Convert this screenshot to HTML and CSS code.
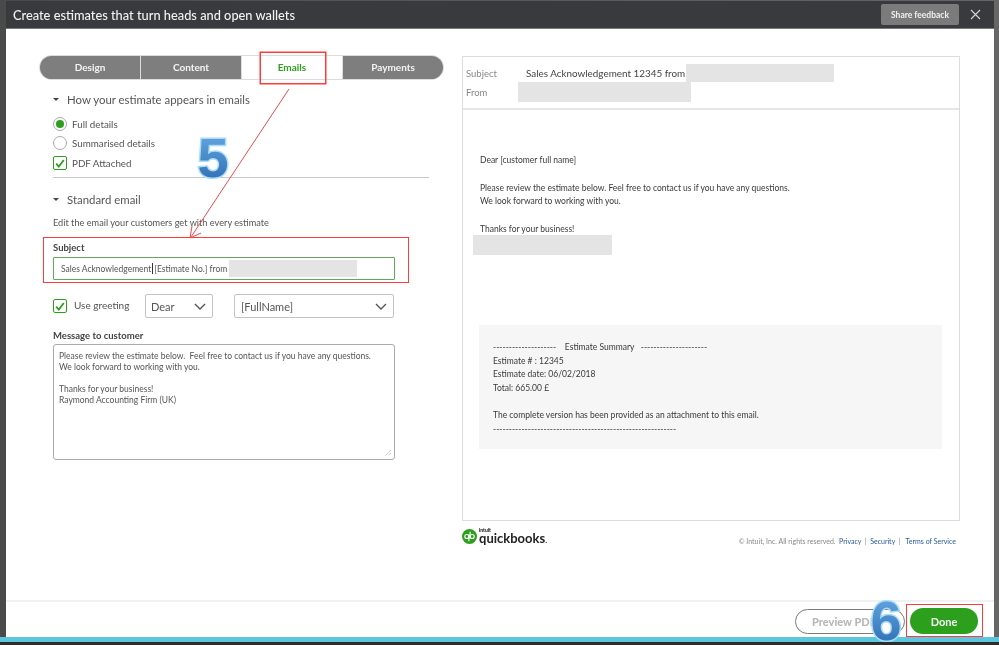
FILE: index.html
```html
<!DOCTYPE html>
<html lang="en">
<head>
<meta charset="utf-8">
<title>Create estimates</title>
<link rel="stylesheet" href="styles.css">
</head>
<body>
<div class="frame">
  <div class="dialog">
    <header class="topbar">
      <h1 class="title">Create estimates that turn heads and open wallets</h1>
      <div class="top-actions">
        <span class="share">Share feedback</span>
        <svg class="close" width="11" height="11" viewBox="0 0 11 11"><path d="M1 1l9 9M10 1l-9 9" stroke="#d5d5d5" stroke-width="1.1" fill="none"/></svg>
      </div>
    </header>
    <main class="body">
      <section class="left">
        <nav class="tabs">
          <span class="tab">Design</span>
          <span class="tab">Content</span>
          <span class="tab active">Emails</span>
          <span class="tab">Payments</span>
        </nav>
        <div class="section-head first"><i class="caret"></i>How your estimate appears in emails</div>
        <div class="opt opt-a"><i class="radio on"></i>Full details</div>
        <div class="opt opt-b"><i class="radio"></i>Summarised details</div>
        <div class="opt opt-c"><i class="check"><svg width="10" height="9" viewBox="0 0 10 9"><path d="M1.2 4.6l2.6 3L8.8 1" stroke="#2ca01c" stroke-width="1.8" fill="none"/></svg></i>PDF Attached</div>
        <div class="rule"></div>
        <div class="section-head second"><i class="caret"></i>Standard email</div>
        <p class="hint">Edit the email your customers get with every estimate</p>
        <label class="field-label subject-label">Subject</label>
        <div class="subject-input">
          <span>Sales Acknowledgement</span><i class="cursor"></i><span>[Estimate No.] from</span><i class="blank blank-subject"></i>
        </div>
        <div class="greeting">
          <i class="check"><svg width="10" height="9" viewBox="0 0 10 9"><path d="M1.2 4.6l2.6 3L8.8 1" stroke="#2ca01c" stroke-width="1.8" fill="none"/></svg></i>
          <span class="greet-label">Use greeting</span>
          <div class="select select-dear">Dear<svg width="12" height="7" viewBox="0 0 12 7"><path d="M1 1l5 5 5-5" stroke="#555" stroke-width="1.4" fill="none"/></svg></div>
          <div class="select select-name">[FullName]<svg width="12" height="7" viewBox="0 0 12 7"><path d="M1 1l5 5 5-5" stroke="#555" stroke-width="1.4" fill="none"/></svg></div>
        </div>
        <label class="field-label message-label">Message to customer</label>
        <div class="message">
          <p>Please review the estimate below.&nbsp; Feel free to contact us if you have any questions.</p>
          <p>We look forward to working with you.</p>
          <p>&nbsp;</p>
          <p>Thanks for your business!</p>
          <p>Raymond Accounting Firm (UK)</p>
          <svg class="grip" width="8" height="8" viewBox="0 0 8 8"><path d="M7 1L1 7M7 4L4 7" stroke="#aaa" stroke-width="1" stroke-dasharray="1 1" fill="none"/></svg>
        </div>
      </section>
      <section class="right">
        <div class="preview">
          <div class="mail-head">
            <div class="mail-row row-subject"><span class="mail-key">Subject</span><span class="mail-subject">Sales Acknowledgement 12345 from</span><i class="blank blank-mail"></i></div>
            <div class="mail-row row-from"><span class="mail-key">From</span><i class="blank blank-from"></i></div>
          </div>
          <div class="mail-body">
            <p class="line salute">Dear [customer full name]</p>
            <p class="line">Please review the estimate below. Feel free to contact us if you have any questions.</p>
            <p class="line">We look forward to working with you.</p>
            <p class="line thanks">Thanks for your business!</p>
            <i class="blank blank-sign"></i>
            <div class="summary">
              <p class="line">--------------------&nbsp;&nbsp;&nbsp; Estimate Summary&nbsp;&nbsp; ---------------------</p>
              <p class="line">Estimate # : 12345</p>
              <p class="line">Estimate date: 06/02/2018</p>
              <p class="line">Total: 665.00 £</p>
              <p class="line gap">The complete version has been provided as an attachment to this email.</p>
              <p class="line">----------------------------------------------------------</p>
            </div>
          </div>
        </div>
        <div class="legal">
          <div class="logo">
            <svg width="15" height="15" viewBox="0 0 15 15"><circle cx="7.5" cy="7.5" r="7.5" fill="#2ca01c"/><circle cx="4.8" cy="7.5" r="2" stroke="#fff" stroke-width="1.1" fill="none"/><circle cx="10.2" cy="7.5" r="2" stroke="#fff" stroke-width="1.1" fill="none"/><path d="M6.9 5.5v6.7M8.1 2.8v6.7" stroke="#fff" stroke-width="1.1" fill="none"/></svg>
            <div class="wordmark"><span class="intuit">intuit</span><span class="qb">quickbooks<small>.</small></span></div>
          </div>
          <div class="links">© Intuit, Inc. All rights reserved.&nbsp; <a>Privacy</a> &nbsp;|&nbsp; <a>Security</a> &nbsp;|&nbsp;&nbsp; <a>Terms of Service</a></div>
        </div>
      </section>
    </main>
    <footer class="foot">
      <span class="btn-preview">Preview PDF</span>
      <span class="btn-done">Done</span>
    </footer>
  </div>
  <div class="cyan"></div>
</div>

<div class="redbox redbox-tab"></div>
<div class="redbox redbox-subject"></div>
<div class="redbox redbox-done"></div>
<svg class="arrow" width="120" height="160" viewBox="0 0 120 160"><path d="M100 1L2 149" stroke="#f04a4a" stroke-width="1" fill="none"/><path d="M12 145L1 150l2-12" stroke="#f04a4a" stroke-width="1" fill="none"/></svg>
<svg class="step step-5" width="40" height="80" viewBox="0 0 40 80">
  <defs><linearGradient id="stepfill" x1="0" y1="0" x2="0" y2="1"><stop offset="0" stop-color="#6aaee8"/><stop offset="1" stop-color="#2a68ad"/></linearGradient></defs>
  <text class="step-glyph" x="20" y="57" fill="url(#stepfill)">5</text>
</svg>
<svg class="step step-6" width="40" height="62" viewBox="0 0 40 62">
  <text class="step-glyph" x="20" y="57" fill="url(#stepfill)">6</text>
</svg>
</body>
</html>
```

FILE: styles.css
```css
* { box-sizing: border-box; }
html, body { margin: 0; padding: 0; }
body {
  width: 999px; height: 645px; overflow: hidden; position: relative;
  background: #fff;
  font-family: Lato, "Open Sans", sans-serif;
  color: #555;
}
p { margin: 0; }
i { display: block; font-style: normal; }
.frame {
  height: 645px;
  padding: 1px 5px 0 6px;
  background: linear-gradient(90deg, #4a4a4a, #666 100%);
  display: flex; flex-direction: column;
  filter: blur(.3px);
}
.dialog { flex: 1; background: #fff; display: flex; flex-direction: column; min-height: 0; }
.cyan { height: 8px; flex: none; margin: 0 -5px 0 -6px; background: linear-gradient(#5cc6dc 0 5px, #2b2c30 5px); }
.topbar {
  height: 28px; flex: none;
  background: #393a3e; border-bottom: 1px solid #77797c;
  display: flex; align-items: center; justify-content: space-between;
  padding: 0 13px 0 7px;
}
.title { margin: 0; font-size: 12.8px; font-weight: 500; color: #f2f2f2; }
.top-actions { display: flex; align-items: center; gap: 11px; }
.share {
  width: 78px; height: 21px; background: #7b7b7b; border-radius: 2px;
  color: #f0f0f0; font-size: 8.5px; font-weight: 700;
  display: flex; align-items: center; justify-content: center;
}
.body { flex: 1; display: flex; min-height: 0; }
.left { width: 456px; padding: 27px 0 0 34px; flex: none; }
.tabs {
  width: 403px; height: 23px; display: flex; border-radius: 12px; overflow: hidden;
  background: #7e7e7e; box-shadow: 0 0 0 1px #ddd;
}
.tab {
  flex: 1; display: flex; align-items: center; justify-content: center; padding-bottom: 1px;
  color: #f4f4f4; font-size: 10px; font-weight: 700; border-right: 1px solid #ddd;
}
.tab:last-child { border-right: 0; }
.tab.active { background: #fff; color: #2ca01c; }
.section-head { font-size: 11.4px; display: flex; align-items: center; color: #555; padding-left: 13px; }
.caret { width: 0; height: 0; border: 3px solid transparent; border-top: 3px solid #444; border-bottom: 0; margin-right: 8px; }
.section-head.first { margin-top: 13px; height: 15px; }
.opt { font-size: 9.8px; display: flex; align-items: center; gap: 5px; margin-left: 13px; height: 14px; color: #555; }
.opt-a { margin-top: 10px; }
.opt-b { margin-top: 5px; }
.opt-c { margin-top: 6px; }
.radio { width: 14px; height: 14px; border-radius: 50%; border: 1px solid #aaa; background: #fff; display: flex; align-items: center; justify-content: center; }
.radio.on::after { content: ""; width: 8px; height: 8px; border-radius: 50%; background: #2ca01c; }
.check { width: 14px; height: 14px; border: 1px solid #2ca01c; border-radius: 2px; display: flex; align-items: center; justify-content: center; flex: none; background: #fff; }
.rule { width: 376px; height: 1px; background: #c8c8d0; margin: 7px 0 0 13px; }
.section-head.second { margin-top: 14px; height: 15px; }
.hint { font-size: 9.2px; margin: 10px 0 0 13px; height: 12px; line-height: 12px; color: #555; }
.field-label { display: block; font-size: 9.5px; font-weight: 700; color: #444; margin-left: 13px; }
.subject-label { margin-top: 13px; height: 12px; line-height: 12px; }
.subject-input {
  width: 342px; height: 23px; margin: 3px 0 0 13px;
  border: 1px solid #63a85a; border-radius: 1px;
  display: flex; align-items: center; padding-left: 7px;
  font-size: 8.5px; color: #555;
}
.cursor { width: 1px; height: 11px; background: #333; margin: 0 1px 0 1px; }
.blank { background: #e4e4e4; }
.blank-subject { width: 128px; height: 17px; margin-left: 2px; }
.greeting { display: flex; align-items: center; margin: 14px 0 0 13px; height: 24px; }
.greet-label { font-size: 10px; margin: -3px 0 0 7px; width: 71px; color: #555; }
.select {
  height: 24px; border: 1px solid #c4c4c4; border-radius: 2px; background: #fff;
  display: flex; align-items: center; justify-content: space-between;
  padding: 0 6px 0 5px; font-size: 11px; color: #555;
}
.select-dear { width: 68px; margin-right: 21px; }
.select-name { width: 160px; padding-left: 6px; }
.message-label { margin-top: 11px; height: 13px; line-height: 13px; }
.message {
  width: 342px; height: 116px; margin: 2px 0 0 13px; position: relative;
  border: 1px solid #aaa; border-radius: 3px; padding: 6px 5px;
  font-size: 8.5px; line-height: 11px; color: #555;
}
.grip { position: absolute; right: 2px; bottom: 2px; }
.right { width: 498px; padding-top: 27px; flex: none; }
.preview { width: 498px; height: 465px; border: 1px solid #ddd; display: flex; flex-direction: column; }
.mail-head { height: 53px; border-bottom: 2px solid #e6e6e6; padding: 7px 0 0 3px; flex: none; }
.mail-row { display: flex; align-items: center; font-size: 9.5px; }
.mail-key { width: 60px; color: #888; }
.row-subject { height: 18px; }
.row-from { height: 20px; margin-top: 0; }
.row-from .mail-key { width: 52px; }
.mail-subject { color: #444; font-size: 9.9px; }
.blank-mail { width: 148px; height: 18px; margin-left: 1px; }
.blank-from { width: 173px; height: 20px; }
.mail-body { flex: 1; padding: 44px 17px 0 17px; }
.line { font-size: 8.5px; line-height: 13.5px; color: #3a3a3a; }
.salute { margin-bottom: 14px; }
.thanks { margin-top: 14px; }
.blank-sign { width: 139px; height: 20px; margin: -1px 0 0 -7px; }
.summary { width: 463px; height: 124px; margin: 70px 0 0 -1px; background: #f6f6f6; padding: 16px 0 0 14px; }
.line.gap { margin-top: 14px; }
.legal { display: flex; justify-content: space-between; align-items: flex-start; width: 494px; margin-top: 6px; }
.logo { display: flex; align-items: center; gap: 2px; }
.wordmark { display: flex; flex-direction: column; }
.intuit { font-size: 5px; font-weight: 900; line-height: 6px; color: #222; }
.qb { font-size: 13px; font-weight: 700; line-height: 11px; color: #222; }
.qb small { font-size: 8px; }
.links { font-size: 7px; color: #888; margin-top: 10px; }
.links a { color: #2a5a9a; }
.foot {
  height: 37px; flex: none; margin-top: auto; border-top: 2px solid #f1f1f4;
  display: flex; align-items: center; justify-content: flex-end; padding: 3px 16px 0 0; gap: 5px;
}
.btn-preview {
  width: 110px; height: 25px; border: 1px solid #7a7a7a; border-radius: 13px; white-space: nowrap;
  color: #b8b8b8; font-size: 11px; font-weight: 900; display: flex; align-items: center; padding-left: 16px;
}
.btn-done {
  width: 68px; height: 26px; border-radius: 13px; background: #2ca01c; color: #f4f4f4;
  font-size: 11px; font-weight: 700; display: flex; align-items: center; justify-content: center;
}
.redbox { position: absolute; border: 1px solid #ff3b3b; }
.redbox-tab { left: 260px; top: 52px; width: 66px; height: 32px; box-shadow: 0 0 0 .5px #ff3b3b; }
.redbox-subject { left: 43px; top: 237px; width: 366px; height: 46px; }
.redbox-done { left: 906px; top: 604px; width: 77px; height: 33px; }
.arrow { position: absolute; left: 189px; top: 88px; }
.step { position: absolute; }
.step-5 { left: 193px; top: 120px; }
.step-6 { left: 866px; top: 583px; }
.step-glyph {
  font-family: "Liberation Sans", sans-serif; font-weight: 700; font-size: 56px;
  text-anchor: middle; stroke: #a8dcf8; stroke-width: 3px; paint-order: stroke;
}
```
